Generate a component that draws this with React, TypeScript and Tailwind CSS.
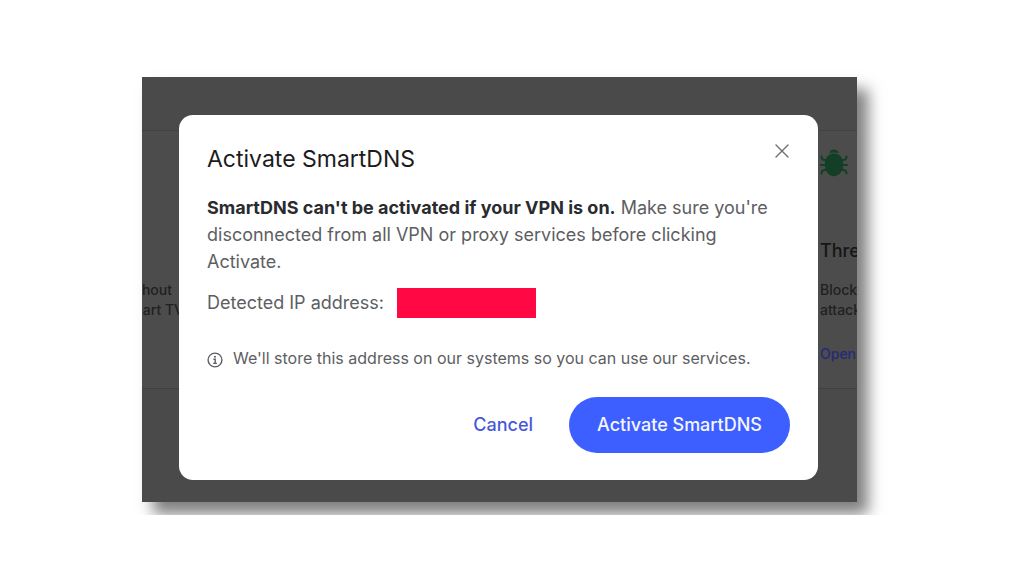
import type { ReactNode } from 'react';

function BugIcon() {
  return (
    <svg viewBox="0 0 28 28" className="size-7 text-[#123f25]" fill="none" stroke="currentColor" strokeWidth="2" strokeLinecap="round" aria-hidden="true">
      <path d="M9.300 4.300C9.800 2 11.500.6 14 .6s4.200 1.400 4.700 3.700C17.200 3.700 15.700 3.400 14 3.400s-3.200.3-4.700.9Z" fill="currentColor" stroke="none" />
      <path d="M14 4.600c5.600 0 9.200 4.500 9.200 10.400C23.200 22.500 19 27.200 14 27.200S4.800 22.500 4.800 15C4.800 9.100 8.400 4.600 14 4.600Z" fill="currentColor" stroke="none" />
      <path d="M6.500 11.500 3.500 10.700C2 10.200 1.500 9.200 1.500 7.500M6 16H1M6.500 20.500l-3 .8c-1.500.5-2 1.500-2 3.200M21.500 11.500l3-.8c1.500-.5 2-1.500 2-3.200M22 16h5M21.500 20.500l3 .8c1.500.5 2 1.500 2 3.200" />
    </svg>
  );
}

function InfoIcon() {
  return (
    <svg viewBox="0 0 16 16" className="mt-1 size-4 shrink-0" fill="none" stroke="currentColor" strokeWidth="1.400" aria-hidden="true">
      <circle cx="8" cy="8" r="6.900" />
      <path d="M6.400 7.200H8.200V11.300M6.200 11.400h3.700" />
      <circle cx="8" cy="4.700" r="1" fill="currentColor" stroke="none" />
    </svg>
  );
}

function CloseIcon() {
  return (
    <svg viewBox="0 0 14 14" className="size-3.5" fill="none" stroke="currentColor" strokeWidth="1.400" strokeLinecap="round" aria-hidden="true">
      <path d="M1 1l12 12M13 1L1 13" />
    </svg>
  );
}

// Dimmed page behind the dialog
function Backdrop() {
  return (
    <div className="col-start-1 row-start-1 flex flex-col overflow-hidden text-sm leading-5 font-medium text-[#202022]">
      <div className="h-[54px] border-b border-[#424242]" />
      <div className="flex h-[258px] justify-between border-b border-[#404040] bg-[#4c4c4c]">
        <div className="flex w-[42px] flex-col items-end pt-[149px] whitespace-nowrap">
          <p className="pr-3">without</p>
          <p>smart TV</p>
        </div>
        <div className="flex w-[37px] flex-col items-start pt-[18px] whitespace-nowrap">
          <BugIcon />
          <h2 className="mt-[62px] text-lg leading-6 font-medium text-[#151516]">Threat Protection</h2>
          <p className="mt-[17px]">Block</p>
          <p>attacks</p>
          <a href="#open" className="mt-6 text-[#252a78]">Open</a>
        </div>
      </div>
    </div>
  );
}

function Dialog({ title, children }: { title: string; children: ReactNode }) {
  return (
    <section role="dialog" aria-labelledby="dialog-title" className="relative col-start-1 row-start-1 mt-[38px] mr-[39px] mb-[22px] ml-[37px] rounded-[14px] bg-white px-7 pt-7 pb-[27px]">
      <header className="flex items-start justify-between">
        <h1 id="dialog-title" className="text-[23px] leading-8 text-[#1b1c20]">{title}</h1>
        <button type="button" aria-label="Close" className="p-px text-[#6e6f73]">
          <CloseIcon />
        </button>
      </header>
      {children}
    </section>
  );
}

function App() {
  return (
    <main className="overflow-hidden bg-white pt-[77px] pr-[167px] pb-[13px] pl-[142px] font-[Inter,sans-serif]">
      <div className="grid bg-[#4a4a4a] shadow-[11px_12px_14px_0_rgba(0,0,0,0.5)]">
        <Backdrop />
        <Dialog title="Activate SmartDNS">
          <p className="mt-[19px] max-w-[570px] text-lg leading-[27px] text-[#5d5e62]">
            <strong className="font-bold text-[#2a2b2f]">SmartDNS can't be activated if your VPN is on.</strong> Make sure you're disconnected from all VPN or proxy services before clicking Activate.
          </p>
          <div className="mt-[13px] flex items-center text-lg leading-7 text-[#5d5e62]">
            <span>Detected IP address:</span>
            <span className="ml-[13px] h-[30px] w-[139px] bg-[#ff0844]" />
          </div>
          <p className="mt-7 flex items-center gap-2.5 text-base leading-6 text-[#5d5e62]">
            <InfoIcon />
            We'll store this address on our systems so you can use our services.
          </p>
          <footer className="mt-[27px] flex items-center justify-end gap-9">
            <button type="button" className="text-lg font-medium text-[#4759d8]">Cancel</button>
            <button type="button" className="h-14 rounded-full bg-[#3e5fff] px-7 text-lg font-medium text-[#f4f6ff]">Activate SmartDNS</button>
          </footer>
        </Dialog>
      </div>
    </main>
  );
}

export default App;
